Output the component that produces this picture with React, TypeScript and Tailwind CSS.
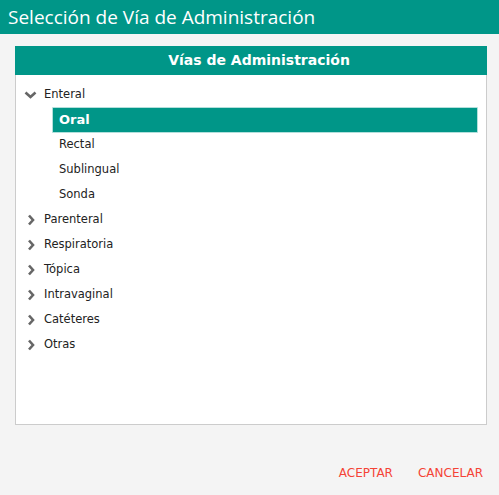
import React from "react";

const Right = () => (
  <svg width="10" height="12" viewBox="0 0 10 12" className="shrink-0">
    <path d="M3 1.5 L7 6 L3 10.5" stroke="#666" strokeWidth="2.6" fill="none" />
  </svg>
);
const Down = () => (
  <svg width="13" height="10" viewBox="0 0 13 10" className="shrink-0">
    <path d="M1.5 2.5 L6.5 7 L11.5 2.5" stroke="#666" strokeWidth="2.6" fill="none" />
  </svg>
);

const children = ["Oral", "Rectal", "Sublingual", "Sonda"];
const others = ["Parenteral", "Respiratoria", "Tópica", "Intravaginal", "Catéteres", "Otras"];

export default function App() {
  return (
    <div className="w-[499px] h-[495px] bg-[#f4f4f4] flex flex-col" style={{ fontFamily: "'DejaVu Sans', sans-serif" }}>
      <div className="h-[34px] bg-[#009688] text-white flex items-center pl-[8px] text-[19px]" style={{ fontFamily: "'Open Sans', sans-serif" }}>
        Selección de Vía de Administración
      </div>
      <div className="mt-[12px] ml-[15px] w-[472px] h-[379px] bg-white border border-[#cccccc] flex flex-col">
        <div className="h-[29px] -mt-px -mx-px bg-[#009688] text-white font-bold text-[14px] flex items-center justify-center pl-[16px]">
          Vías de Administración
        </div>
        <div className="flex flex-col pt-[7px] text-[11.5px] text-[#222]">
          <div className="h-[25px] flex items-center pl-[8px] gap-[7px]">
            <Down />
            <span>Enteral</span>
          </div>
          {children.map((c, i) =>
            i === 0 ? (
              <div key={c} className="h-[25px] flex items-center pl-[36px] pr-[8px]">
                <div className="h-[26px] w-full bg-[#009688] text-white font-bold text-[13px] flex items-center pl-[6px] border border-[#b2dfdb] rounded-[1px]">
                  {c}
                </div>
              </div>
            ) : (
              <div key={c} className="h-[25px] flex items-center pl-[43px]">
                {c}
              </div>
            )
          )}
          {others.map((c) => (
            <div key={c} className="h-[25px] flex items-center pl-[10px] gap-[8px]">
              <Right />
              <span>{c}</span>
            </div>
          ))}
        </div>
      </div>
      <div className="flex justify-end gap-[25px] pr-[16px] mt-[39px] text-[#f44336] text-[12px]">
        <span>ACEPTAR</span>
        <span>CANCELAR</span>
      </div>
    </div>
  );
}
